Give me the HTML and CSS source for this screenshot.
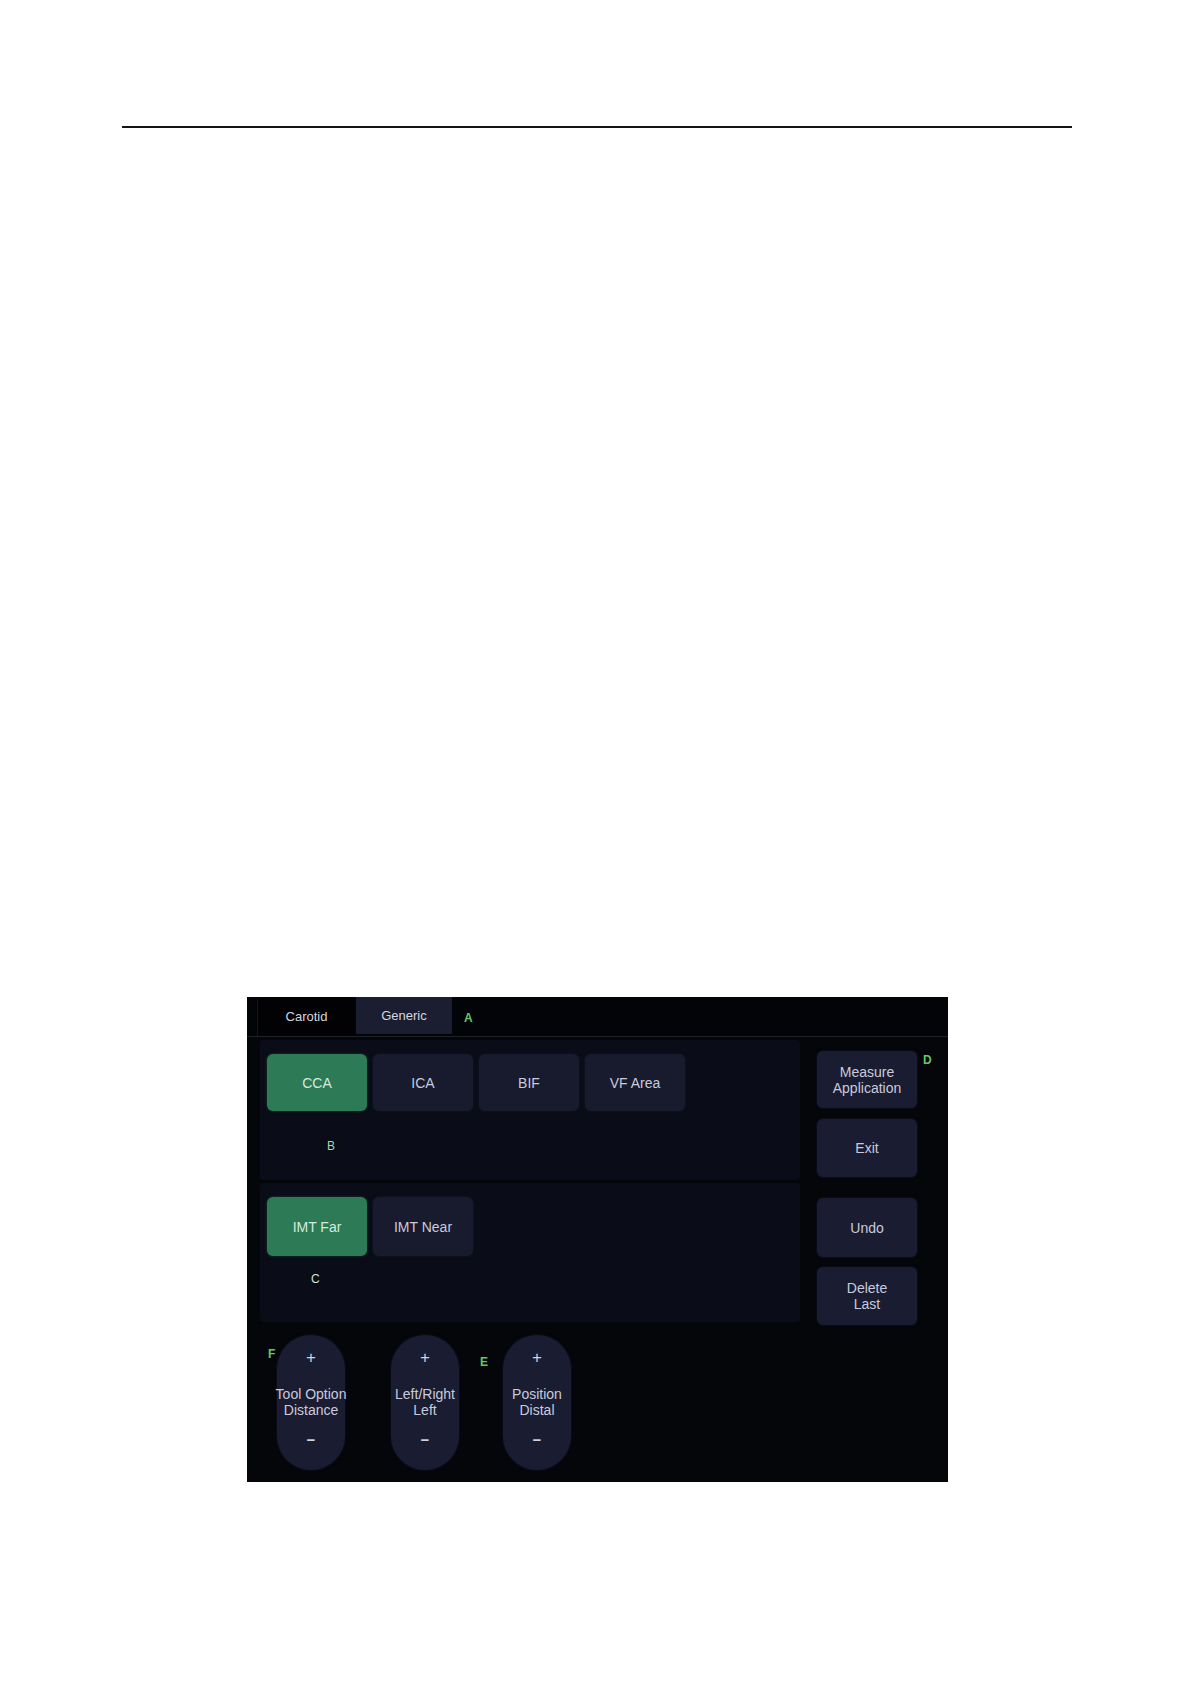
FILE: index.html
```html
<!DOCTYPE html>
<html>
<head>
<meta charset="utf-8">
<link rel="stylesheet" href="styles.css">
</head>
<body>
<div class="rule"></div>
<div class="panel">
  <div class="tabbar">
    <div class="tab tab-active">Carotid</div>
    <div class="tab tab-idle">Generic</div>
    <div class="mark mark-a">A</div>
  </div>
  <div class="main">
    <div class="left">
      <div class="section section-b">
        <div class="btnrow">
          <div class="btn btn-on">CCA</div>
          <div class="btn">ICA</div>
          <div class="btn">BIF</div>
          <div class="btn">VF Area</div>
        </div>
        <div class="mark mark-b">B</div>
      </div>
      <div class="section section-c">
        <div class="btnrow">
          <div class="btn btn-on">IMT Far</div>
          <div class="btn">IMT Near</div>
        </div>
        <div class="mark mark-c">C</div>
      </div>
    </div>
    <div class="right">
      <div class="side side-1">Measure<br>Application<span class="mark mark-d">D</span></div>
      <div class="side side-2">Exit</div>
      <div class="side side-3">Undo</div>
      <div class="side side-4">Delete<br>Last</div>
    </div>
  </div>
  <div class="pills">
    <div class="pill pill-1"><span class="mark mark-f">F</span><span class="pm">+</span><span class="pl">Tool Option<br>Distance</span><span class="pm minus">−</span></div>
    <div class="pill pill-2"><span class="pm">+</span><span class="pl">Left/Right<br>Left</span><span class="pm minus">−</span></div>
    <div class="pill pill-3"><span class="mark mark-e">E</span><span class="pm">+</span><span class="pl">Position<br>Distal</span><span class="pm minus">−</span></div>
  </div>
</div>
</body>
</html>
```
FILE: styles.css
```css
html, body {
  margin: 0;
  padding: 0;
  background: #ffffff;
}
body {
  font-family: "Liberation Sans", Arial, sans-serif;
  width: 1191px;
  height: 1684px;
  overflow: hidden;
}
.rule {
  margin: 126px 0 0 122px;
  width: 950px;
  height: 2px;
  background: #141414;
}
.panel {
  margin: 869px 0 0 247px;
  width: 701px;
  height: 485px;
  background: #05060a;
  box-sizing: border-box;
  color: #c9cbdd;
  font-size: 14px;
}
.tabbar {
  height: 39px;
  border-bottom: 1px solid #1f2129;
  display: flex;
  align-items: flex-end;
  padding-left: 10px;
  background: #030407;
}
.tab {
  height: 37px;
  display: flex;
  align-items: center;
  justify-content: center;
  color: #d6d7de;
  font-size: 13px;
}
.tab-active {
  width: 98px;
  background: #020204;
  border-left: 1px solid #14151b;
  box-sizing: border-box;
  padding-bottom: 2px;
}
.tab-idle {
  width: 96px;
  margin-left: 1px;
  background: #1b1d30;
  margin-bottom: 2px;
  height: 37px;
}
.mark {
  color: #5fcb60;
  font-weight: bold;
  font-size: 12px;
}
.mark-a {
  margin-left: 12px;
  align-self: center;
  margin-top: 2px;
}
.main {
  display: grid;
  grid-template-columns: 540px 100px;
  column-gap: 17px;
  padding-left: 13px;
  padding-top: 3px;
}
.left {
  display: flex;
  flex-direction: column;
  gap: 3px;
}
.section {
  background: #0a0c17;
  border-radius: 3px;
  box-sizing: border-box;
  padding: 14px 0 0 7px;
}
.section-b { height: 140px; }
.section-c { height: 139px; }
.btnrow {
  display: flex;
  gap: 6px;
}
.btn {
  width: 100px;
  height: 57px;
  border-radius: 6px;
  background: #181a2e;
  display: flex;
  align-items: center;
  justify-content: center;
  box-shadow: 0 0 3px rgba(30, 32, 60, 0.6);
}
.section-c .btn { height: 59px; }
.btn-on {
  background: #2c7a56;
  color: #d4ecdd;
  box-shadow: 0 0 3px rgba(40, 110, 80, 0.5);
}
.mark-b {
  margin: 28px 0 0 60px;
  color: #a9d8a9;
  font-weight: normal;
  line-height: 14px;
}
.mark-c {
  margin: 16px 0 0 44px;
  color: #d5e2d5;
  font-weight: normal;
  line-height: 14px;
}
.right {
  display: flex;
  flex-direction: column;
}
.side {
  width: 100px;
  border-radius: 6px;
  background: #1a1c31;
  display: flex;
  align-items: center;
  justify-content: center;
  text-align: center;
  line-height: 16px;
  position: relative;
  box-shadow: 0 0 3px rgba(30, 32, 60, 0.6);
}
.side-1 { margin-top: 11px; height: 57px; }
.side-2 { margin-top: 11px; height: 58px; }
.side-3 { margin-top: 21px; height: 59px; }
.side-4 { margin-top: 10px; height: 58px; }
.mark-d {
  position: absolute;
  left: 106px;
  top: 1px;
}
.pills {
  display: flex;
  padding-left: 30px;
  margin-top: 10px;
}
.pill {
  position: relative;
  width: 68px;
  height: 135px;
  border-radius: 34px;
  background: #1a1c31;
  display: flex;
  flex-direction: column;
  align-items: center;
  box-shadow: 0 0 3px rgba(30, 32, 60, 0.6);
}
.pill-2 { margin-left: 46px; }
.pill-3 { margin-left: 44px; }
.pm {
  margin-top: 14px;
  font-size: 17px;
  line-height: 18px;
  color: #d0d2e2;
}
.pm.minus {
  margin-top: 13px;
  font-size: 15px;
  font-weight: bold;
}
.pl {
  margin-top: 19px;
  text-align: center;
  line-height: 16px;
  white-space: nowrap;
}
.mark-f {
  position: absolute;
  left: -9px;
  top: 12px;
}
.mark-e {
  position: absolute;
  left: -23px;
  top: 20px;
}
```
